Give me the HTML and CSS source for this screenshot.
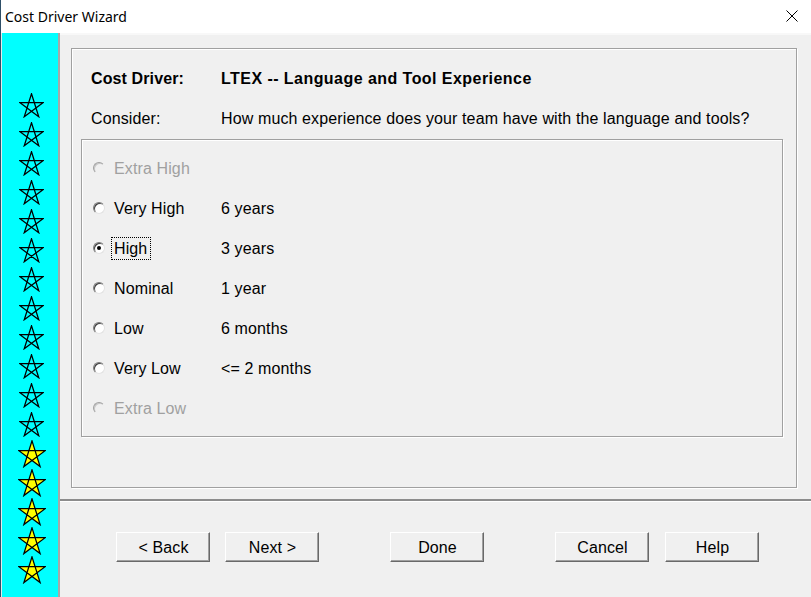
FILE: index.html
```html
<!DOCTYPE html>
<html>
<head>
<meta charset="utf-8">
<link rel="stylesheet" href="styles.css">
</head>
<body>
<div class="window">
  <div class="titlebar">
    <span class="title">Cost Driver Wizard</span>
    <svg class="close" width="12" height="12" viewBox="0 0 12 12"><path d="M0.5 0.5 L11.5 11.5 M11.5 0.5 L0.5 11.5" stroke="#000" stroke-width="1" fill="none"/></svg>
  </div>
  <div class="client">
    <div class="sidebar">
      <div class="stars">
        <svg class="star" viewBox="0 0 100 100"><path d="M50 3 L79 95 L3 38 L97 38 L21 95 Z"/></svg>
        <svg class="star" viewBox="0 0 100 100"><path d="M50 3 L79 95 L3 38 L97 38 L21 95 Z"/></svg>
        <svg class="star" viewBox="0 0 100 100"><path d="M50 3 L79 95 L3 38 L97 38 L21 95 Z"/></svg>
        <svg class="star" viewBox="0 0 100 100"><path d="M50 3 L79 95 L3 38 L97 38 L21 95 Z"/></svg>
        <svg class="star" viewBox="0 0 100 100"><path d="M50 3 L79 95 L3 38 L97 38 L21 95 Z"/></svg>
        <svg class="star" viewBox="0 0 100 100"><path d="M50 3 L79 95 L3 38 L97 38 L21 95 Z"/></svg>
        <svg class="star" viewBox="0 0 100 100"><path d="M50 3 L79 95 L3 38 L97 38 L21 95 Z"/></svg>
        <svg class="star" viewBox="0 0 100 100"><path d="M50 3 L79 95 L3 38 L97 38 L21 95 Z"/></svg>
        <svg class="star" viewBox="0 0 100 100"><path d="M50 3 L79 95 L3 38 L97 38 L21 95 Z"/></svg>
        <svg class="star" viewBox="0 0 100 100"><path d="M50 3 L79 95 L3 38 L97 38 L21 95 Z"/></svg>
        <svg class="star" viewBox="0 0 100 100"><path d="M50 3 L79 95 L3 38 L97 38 L21 95 Z"/></svg>
        <svg class="star" viewBox="0 0 100 100"><path d="M50 3 L79 95 L3 38 L97 38 L21 95 Z"/></svg>
        <svg class="star gold" viewBox="0 0 100 100"><path d="M50 3 L79 95 L3 38 L97 38 L21 95 Z"/></svg>
        <svg class="star gold" viewBox="0 0 100 100"><path d="M50 3 L79 95 L3 38 L97 38 L21 95 Z"/></svg>
        <svg class="star gold" viewBox="0 0 100 100"><path d="M50 3 L79 95 L3 38 L97 38 L21 95 Z"/></svg>
        <svg class="star gold" viewBox="0 0 100 100"><path d="M50 3 L79 95 L3 38 L97 38 L21 95 Z"/></svg>
        <svg class="star gold" viewBox="0 0 100 100"><path d="M50 3 L79 95 L3 38 L97 38 L21 95 Z"/></svg>
      </div>
    </div>
    <div class="pane">
      <div class="top">
        <div class="frame">
          <div class="info-row bold"><span class="lbl">Cost Driver:</span><span class="title-val">LTEX -- Language and Tool Experience</span></div>
          <div class="info-row"><span class="lbl">Consider:</span><span>How much experience does your team have with the language and tools?</span></div>
          <div class="group">
            <div class="opt disabled"><span class="radio"></span><span class="olbl">Extra High</span><span></span></div>
            <div class="opt"><span class="radio"></span><span class="olbl">Very High</span><span>6 years</span></div>
            <div class="opt"><span class="radio checked"></span><span class="olbl"><span class="focus">High</span></span><span>3 years</span></div>
            <div class="opt"><span class="radio"></span><span class="olbl">Nominal</span><span>1 year</span></div>
            <div class="opt"><span class="radio"></span><span class="olbl">Low</span><span>6 months</span></div>
            <div class="opt"><span class="radio"></span><span class="olbl">Very Low</span><span>&lt;= 2 months</span></div>
            <div class="opt disabled"><span class="radio"></span><span class="olbl">Extra Low</span><span></span></div>
          </div>
        </div>
      </div>
      <div class="sep"></div>
      <div class="buttons">
        <button class="btn">&lt; Back</button>
        <button class="btn b-next">Next &gt;</button>
        <button class="btn b-far">Done</button>
        <button class="btn b-far">Cancel</button>
        <button class="btn b-help">Help</button>
      </div>
    </div>
  </div>
</div>
</body>
</html>
```
FILE: styles.css
```css
* { box-sizing: border-box; }
html, body { margin: 0; padding: 0; }
body {
  width: 811px;
  height: 597px;
  overflow: hidden;
  background: #f0f0f0;
  font-family: "Liberation Sans", Arial, sans-serif;
  font-size: 16px;
  letter-spacing: 0.12px;
  color: #000;
}
.window {
  width: 811px;
  height: 597px;
  border-left: 1px solid #2e4f68;
  display: flex;
  flex-direction: column;
}
.titlebar {
  height: 33px;
  background: #fff;
  display: flex;
  align-items: center;
  padding-left: 4px;
  padding-bottom: 1px;
}
.title {
  font-family: "Noto Sans", "Open Sans", sans-serif;
  font-size: 14px;
  letter-spacing: 0;
  color: #000;
}
.close {
  margin-left: auto;
  margin-right: 13px;
}
.client {
  flex: 1;
  display: flex;
  min-height: 0;
}
.sidebar {
  width: 59px;
  background: #00ffff;
  border-left: 1px solid #e8e8e8;
  border-right: 2px solid #a8a8a8;
  padding-top: 58px;
}
.stars {
  display: flex;
  flex-direction: column;
  align-items: center;
  padding-left: 3px;
}
.star {
  width: 25px;
  height: 25px;
  margin: 2px 0;
  display: block;
}
.star path {
  fill: none;
  stroke: #000;
  stroke-width: 5;
  stroke-linejoin: miter;
}
.star.gold {
  width: 28px;
  height: 28px;
  margin: 0.5px 0;
}
.star.gold path {
  fill: #ffff00;
  stroke-width: 4.5;
}
.pane {
  flex: 1;
  display: flex;
  flex-direction: column;
  border-top: 2px solid #f8f8f8;
}
.top {
  padding: 13px 14px 0 11px;
}
.frame {
  border: 1px solid #a0a0a0;
  box-shadow: inset 1px 1px 0 #fff, 1px 1px 0 #fff;
  height: 440px;
  padding: 9px 13px 0 9px;
}
.info-row {
  height: 40px;
  display: flex;
  align-items: center;
  padding-left: 10px;
  padding-top: 2px;
}
.info-row.bold { font-weight: bold; }
.title-val { letter-spacing: 0.45px; }
.lbl { width: 130px; flex: none; }
.group {
  margin-top: 1px;
  border: 1px solid #a0a0a0;
  box-shadow: inset 1px 1px 0 #fff, 1px 1px 0 #fff;
  padding: 8px 0 8px 11px;
}
.opt {
  height: 40px;
  display: flex;
  align-items: center;
  padding-top: 2px;
}
.radio {
  width: 12px;
  height: 12px;
  border-radius: 50%;
  flex: none;
  background: #fff;
  border: 1px solid;
  border-color: #7a7a7a #e2e2e2 #e2e2e2 #7a7a7a;
  box-shadow: inset 1px 1px 0 #404040;
  position: relative;
  margin-top: -3px;
}
.radio.checked::after {
  content: "";
  position: absolute;
  left: 3px;
  top: 3px;
  width: 4px;
  height: 4px;
  border-radius: 50%;
  background: #000;
}
.olbl {
  width: 107px;
  margin-left: 9px;
  flex: none;
}
.focus {
  outline: 1px dotted #000;
  outline-offset: 2px;
  padding: 0 1px 0 0;
}
.disabled { color: #a0a0a0; }
.disabled .radio {
  background: #f0f0f0;
  border-color: #a0a0a0 #f0f0f0 #f0f0f0 #a0a0a0;
  box-shadow: inset 1px 1px 0 #c8c8c8;
}
.sep {
  margin-top: 11px;
  height: 3px;
  border-top: 2px solid #8c8c8c;
  border-bottom: 1px solid #fff;
}
.buttons {
  display: flex;
  padding: 30px 0 0 56px;
}
.btn {
  width: 94px;
  height: 30px;
  font-family: "Liberation Sans", Arial, sans-serif;
  font-size: 16px;
  letter-spacing: 0.12px;
  color: #000;
  background: #f0f0f0;
  border: 1px solid;
  border-color: #fff #696969 #696969 #fff;
  box-shadow: inset -1px -1px 0 #a0a0a0;
  padding: 2px 0 0 1px;
  flex: none;
}
.b-next { margin-left: 15px; }
.b-far { margin-left: 71px; }
.b-help { margin-left: 16px; }
```
